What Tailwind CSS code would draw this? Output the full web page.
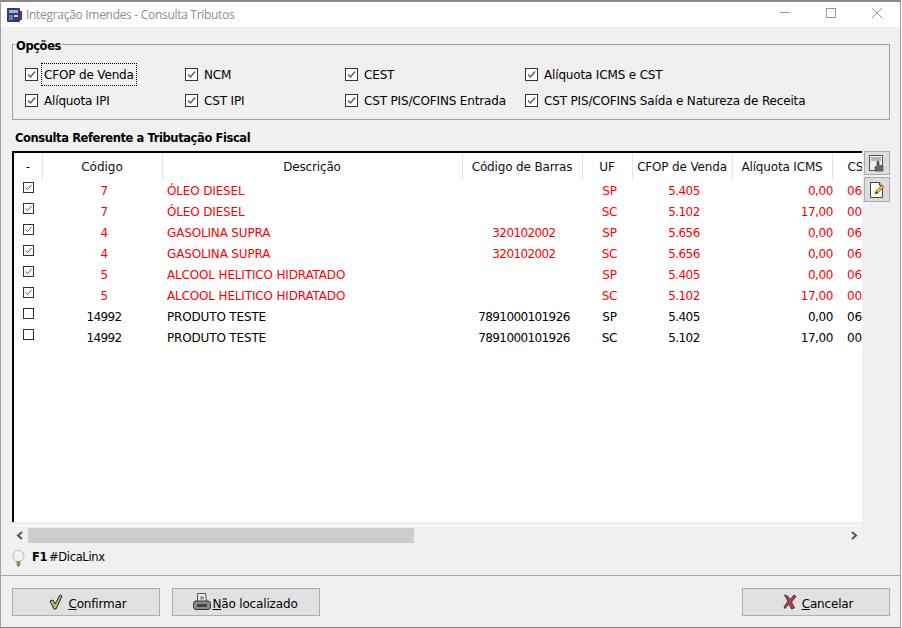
<!DOCTYPE html>
<html lang="pt-BR">
<head>
    <meta charset="UTF-8">
    <title>Integração Imendes - Consulta Tributos</title>
    <script src="https://cdn.jsdelivr.net/npm/@tailwindcss/browser@4"></script>
</head>
<body class="bg-white overflow-hidden">
    <div class="w-[901px] h-[628px] flex flex-col bg-[#f0f0f0] border-t-2 border-l border-r border-b border-t-[#8a8a8a] border-x-[#a0a0a0] border-b-[#808080] font-['DejaVu_Sans',sans-serif] text-[12px] tracking-[-0.16px] text-black">
        <!-- Title bar -->
        <div class="h-[25px] bg-white flex items-center shrink-0">
            <svg class="ml-[5px] w-[16px] h-[16px]" viewBox="0 0 16 16">
                <rect x="1" y="1" width="13" height="14" rx="1" fill="#2f3f66"/>
                <rect x="3" y="3" width="9" height="3" fill="#9fb4d8"/>
                <rect x="3" y="8" width="4" height="5" fill="#5f7fc0"/>
                <rect x="8" y="8" width="4" height="2" fill="#c8d2e6"/>
                <rect x="14" y="4" width="2" height="9" fill="#7a2f3a"/>
            </svg>
            <span class="ml-[4px] font-['Open_Sans',sans-serif] tracking-[-0.3px] text-[#8e8e8e]">Integração Imendes - Consulta Tributos</span>
            <div class="ml-auto mb-[3px] flex items-center">
                <svg class="w-[46px] h-[12px]" viewBox="0 0 46 12"><path d="M18 5.500h10" stroke="#9a9a9a"/></svg>
                <svg class="w-[46px] h-[12px]" viewBox="0 0 46 12"><rect x="18.500" y="1.500" width="9" height="9" fill="none" stroke="#9a9a9a"/></svg>
                <svg class="w-[46px] h-[12px]" viewBox="0 0 46 12"><path d="M18 1l10 10M28 1L18 11" stroke="#9a9a9a"/></svg>
            </div>
        </div>

        <!-- Opcoes -->
        <fieldset class="ml-[11px] mr-[10px] mt-[8px] h-[85px] border border-[#a0a0a0] pl-[12px] pt-[7px] shrink-0">
            <legend class="-ml-[10px] px-[1px] pt-[4px] font-bold text-[11.5px] tracking-[-0.4px] leading-[15px]">Opções</legend>
            <div class="grid grid-cols-[160px_160px_180px_1fr] auto-rows-[26px] items-center">
                <label class="flex items-center gap-[6px]"><span class="w-[13px] h-[13px] border border-[#333] bg-white flex items-center justify-center"><svg class="w-[11px] h-[11px]" viewBox="0 0 11 11"><path d="M2 5.500l2.500 2.500L9 2.500" fill="none" stroke="#555" stroke-width="1.300"/></svg></span><span class="-ml-[2px] px-[2px] pt-[4px] pb-[3px] mt-[1px] outline-1 outline-dotted outline-black leading-[14px]">CFOP de Venda</span></label>
                <label class="flex items-center gap-[6px]"><span class="w-[13px] h-[13px] border border-[#333] bg-white flex items-center justify-center"><svg class="w-[11px] h-[11px]" viewBox="0 0 11 11"><path d="M2 5.500l2.500 2.500L9 2.500" fill="none" stroke="#555" stroke-width="1.300"/></svg></span><span class="mt-[2px]">NCM</span></label>
                <label class="flex items-center gap-[6px]"><span class="w-[13px] h-[13px] border border-[#333] bg-white flex items-center justify-center"><svg class="w-[11px] h-[11px]" viewBox="0 0 11 11"><path d="M2 5.500l2.500 2.500L9 2.500" fill="none" stroke="#555" stroke-width="1.300"/></svg></span><span class="mt-[2px]">CEST</span></label>
                <label class="flex items-center gap-[6px]"><span class="w-[13px] h-[13px] border border-[#333] bg-white flex items-center justify-center"><svg class="w-[11px] h-[11px]" viewBox="0 0 11 11"><path d="M2 5.500l2.500 2.500L9 2.500" fill="none" stroke="#555" stroke-width="1.300"/></svg></span><span class="mt-[2px]">Alíquota ICMS e CST</span></label>
                <label class="flex items-center gap-[6px]"><span class="w-[13px] h-[13px] border border-[#333] bg-white flex items-center justify-center"><svg class="w-[11px] h-[11px]" viewBox="0 0 11 11"><path d="M2 5.500l2.500 2.500L9 2.500" fill="none" stroke="#555" stroke-width="1.300"/></svg></span><span class="mt-[2px]">Alíquota IPI</span></label>
                <label class="flex items-center gap-[6px]"><span class="w-[13px] h-[13px] border border-[#333] bg-white flex items-center justify-center"><svg class="w-[11px] h-[11px]" viewBox="0 0 11 11"><path d="M2 5.500l2.500 2.500L9 2.500" fill="none" stroke="#555" stroke-width="1.300"/></svg></span><span class="mt-[2px]">CST IPI</span></label>
                <label class="flex items-center gap-[6px]"><span class="w-[13px] h-[13px] border border-[#333] bg-white flex items-center justify-center"><svg class="w-[11px] h-[11px]" viewBox="0 0 11 11"><path d="M2 5.500l2.500 2.500L9 2.500" fill="none" stroke="#555" stroke-width="1.300"/></svg></span><span class="mt-[2px]">CST PIS/COFINS Entrada</span></label>
                <label class="flex items-center gap-[6px]"><span class="w-[13px] h-[13px] border border-[#333] bg-white flex items-center justify-center"><svg class="w-[11px] h-[11px]" viewBox="0 0 11 11"><path d="M2 5.500l2.500 2.500L9 2.500" fill="none" stroke="#555" stroke-width="1.300"/></svg></span><span class="mt-[2px]">CST PIS/COFINS Saída e Natureza de Receita</span></label>
            </div>
        </fieldset>

        <div class="ml-[14px] mt-[11px] font-bold text-[11.5px] tracking-[-0.4px] leading-[15px] shrink-0">Consulta Referente a Tributação Fiscal</div>

        <!-- Grid + side buttons -->
        <div class="flex ml-[11px] mt-[5px] shrink-0">
            <div class="w-[850px] h-[371px] bg-white border-t-2 border-l-2 border-black overflow-hidden">
                <table class="table-fixed w-[898px] border-collapse">
                    <colgroup>
                        <col class="w-[28px]"><col class="w-[120px]"><col class="w-[300px]"><col class="w-[120px]"><col class="w-[50px]"><col class="w-[100px]"><col class="w-[100px]"><col class="w-[80px]">
                    </colgroup>
                    <thead>
                        <tr class="h-[27px] text-[#111]">
                            <th class="font-normal border-r border-[#e4e4e4]">-</th>
                            <th class="font-normal tracking-normal border-r border-[#e4e4e4]">Código</th>
                            <th class="font-normal border-r border-[#e4e4e4]">Descrição</th>
                            <th class="font-normal border-r border-[#e4e4e4]">Código de Barras</th>
                            <th class="font-normal border-r border-[#e4e4e4]">UF</th>
                            <th class="font-normal border-r border-[#e4e4e4]">CFOP de Venda</th>
                            <th class="font-normal border-r border-[#e4e4e4]">Alíquota ICMS</th>
                            <th class="font-normal text-left pl-[15px]">CST</th>
                        </tr>
                    </thead>
                    <tbody id="rows"></tbody>
                </table>
            </div>
            <div class="ml-[2px] flex flex-col gap-[2px]">
                <button class="w-[26px] h-[24px] bg-[#dcdcdc] border border-[#adadad] flex items-center justify-center">
                    <svg class="w-[18px] h-[18px]" viewBox="0 0 18 18"><rect x="1.500" y="1.500" width="13" height="15" fill="#efefef" stroke="#555"/><path d="M3 4h10M3 6h10" stroke="#7d7d7d"/><path d="M7 17v-4l2-1V7.500h2V11l4 1v5z" fill="#75665a" stroke="#333" stroke-width=".6"/></svg>
                </button>
                <button class="w-[26px] h-[25px] bg-[#dcdcdc] border border-[#adadad] flex items-center justify-center">
                    <svg class="w-[18px] h-[18px]" viewBox="0 0 18 18"><path d="M2.500 1.500h9l3 3v12h-12z" fill="#fff" stroke="#444"/><path d="M11.500 1.500v3h3" fill="#ddd" stroke="#444"/><path d="M7 13l1-3 6-6 2 2-6 6z" fill="#e2b93c" stroke="#7a5a10" stroke-width=".6"/><path d="M7 13l1-3 2 2z" fill="#333"/></svg>
                </button>
            </div>
        </div>

        <!-- Horizontal scrollbar -->
        <div class="ml-[11px] w-[850px] border-t border-white mt-[3px] shrink-0"></div>
        <div class="ml-[11px] w-[850px] h-[17px] flex items-center shrink-0 mt-[1px]">
            <svg class="w-[16px] h-[17px]" viewBox="0 0 16 17"><path d="M10 5L6 8.500l4 3.500" fill="none" stroke="#555" stroke-width="2"/></svg>
            <div class="w-[386px] h-[15px] bg-[#cdcdcd]"></div>
            <svg class="ml-auto w-[16px] h-[17px]" viewBox="0 0 16 17"><path d="M6 5l4 3.500L6 12" fill="none" stroke="#555" stroke-width="2"/></svg>
        </div>

        <!-- Dica -->
        <div class="ml-[11px] mt-[3px] h-[22px] flex items-center shrink-0">
            <svg class="w-[13px] h-[17px]" viewBox="0 0 13 17"><circle cx="6.500" cy="6" r="5.500" fill="#eef1f7" stroke="#b4bac6"/><path d="M3.500 4a3 3 0 0 1 3-2" fill="none" stroke="#fff" stroke-width="1.500"/><rect x="4.500" y="11" width="4" height="4" fill="#a58a4a"/><rect x="5.500" y="15" width="2" height="1.500" fill="#555"/></svg>
            <span class="ml-[7px] font-bold text-[11.5px] tracking-[-0.4px]">F1</span>
            <span class="ml-[2px] text-[11.5px] tracking-[-0.35px]">#DicaLinx</span>
        </div>

        <!-- Footer buttons -->
        <div class="mt-[6px] flex-1 border-t border-[#a8a8a8] pt-[12px] pl-[11px] pr-[10px] flex items-start">
            <button class="w-[148px] h-[28px] bg-[#e1e1e1] border border-[#adadad] flex items-center justify-center gap-[5px] pl-[4px]">
                <svg class="w-[14px] h-[16px]" viewBox="0 0 14 16"><path d="M1 7l3-1 2 4 5-9 2 1-6 13H5z" fill="#a8c878" stroke="#222" stroke-width="1"/></svg>
                <span class="pt-[3px]"><u>C</u>onfirmar</span>
            </button>
            <button class="ml-[12px] w-[148px] h-[28px] bg-[#e1e1e1] border border-[#adadad] flex items-center justify-center pr-[2px]">
                <svg class="w-[20px] h-[20px]" viewBox="0 0 20 20"><path d="M5.500 1.500h8l1 8h-9z" fill="#e6ece6" stroke="#555"/><circle cx="10" cy="6" r="2" fill="#9a9a9a"/><rect x="1.500" y="9" width="17" height="8.500" rx="2.500" fill="#8a8a8a" stroke="#333"/><rect x="5" y="12" width="10" height="3" fill="#444"/></svg>
                <span class="pt-[3px]"><u>N</u>ão localizado</span>
            </button>
            <button class="ml-auto w-[148px] h-[28px] bg-[#e1e1e1] border border-[#adadad] flex items-center justify-center gap-[5px] pl-[4px]">
                <svg class="w-[14px] h-[16px]" viewBox="0 0 14 16"><path d="M1.500 1l3 1 2.500 3.500L11 1l2 1.500-4.500 5.500 3 6-3 1-2.500-5-4 4.500-1-1.500 4-6z" fill="#c8384a" stroke="#222" stroke-width=".8"/></svg>
                <span class="pt-[3px]"><u>C</u>ancelar</span>
            </button>
        </div>
    </div>

    <script>
        // linhas da consulta
        const linhas = [
            ['7', 'ÓLEO DIESEL', '', 'SP', '5.405', '0,00', '06', 1],
            ['7', 'ÓLEO DIESEL', '', 'SC', '5.102', '17,00', '00', 1],
            ['4', 'GASOLINA SUPRA', '320102002', 'SP', '5.656', '0,00', '06', 1],
            ['4', 'GASOLINA SUPRA', '320102002', 'SC', '5.656', '0,00', '06', 1],
            ['5', 'ALCOOL HELITICO HIDRATADO', '', 'SP', '5.405', '0,00', '06', 1],
            ['5', 'ALCOOL HELITICO HIDRATADO', '', 'SC', '5.102', '17,00', '00', 1],
            ['14992', 'PRODUTO TESTE', '7891000101926', 'SP', '5.405', '0,00', '06', 0],
            ['14992', 'PRODUTO TESTE', '7891000101926', 'SC', '5.102', '17,00', '00', 0]
        ];
        const rows = document.getElementById('rows');
        linhas.forEach(l => {
            const tr = document.createElement('tr');
            tr.className = 'h-[21px] ' + (l[7] ? 'text-[#ff0000]' : 'text-black');
            tr.innerHTML = `
                <td class="pl-[9px] align-top pt-[2px]"><span class="w-[11px] h-[11px] border border-[#333] bg-white flex items-center justify-center">${l[7] ? '<svg class="w-[9px] h-[9px]" viewBox="0 0 9 9"><path d="M1.500 4.500l2 2L7.500 2" fill="none" stroke="#555"/></svg>' : ''}</span></td>
                <td class="text-center pl-[4px] tracking-[-0.6px]">${l[0]}</td>
                <td class="pl-[5px]">${l[1]}</td>
                <td class="text-center pl-[4px] tracking-[-0.6px]">${l[2]}</td>
                <td class="text-center pl-[5px]">${l[3]}</td>
                <td class="text-center pl-[4px] tracking-[-0.6px]">${l[4]}</td>
                <td class="text-right tracking-[-0.4px]"><span class="inline-block translate-x-[1px]">${l[5]}</span></td>
                <td class="pl-[15px]">${l[6]}</td>`;
            rows.appendChild(tr);
        });
    </script>
</body>
</html>
